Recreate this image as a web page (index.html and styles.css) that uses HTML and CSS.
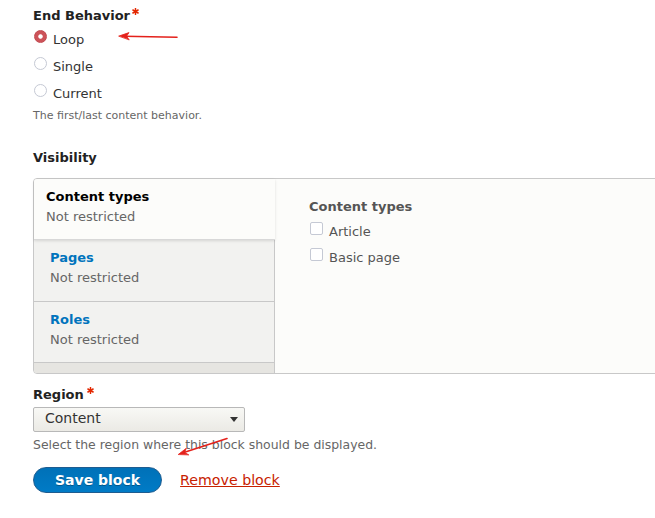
FILE: index.html
```html
<!DOCTYPE html>
<html lang="en">
<head>
<meta charset="utf-8">
<title>Block settings</title>
<link rel="stylesheet" href="styles.css">
</head>
<body>
<div class="page">
  <div class="form-item">
    <div class="label">End Behavior<svg class="req" viewBox="0 0 7 7"><g stroke="#e32700" stroke-width="1.5" stroke-linecap="round"><line x1="3.5" y1="0.6" x2="3.5" y2="6.4"/><line x1="0.9" y1="2" x2="6.1" y2="5"/><line x1="0.9" y1="5" x2="6.1" y2="2"/></g></svg></div>
    <div class="radios">
      <div class="option"><span class="radio checked"></span><span>Loop</span></div>
      <div class="option"><span class="radio"></span><span>Single</span></div>
      <div class="option"><span class="radio"></span><span>Current</span></div>
    </div>
    <div class="desc-small">The first/last content behavior.</div>
  </div>

  <div class="label visibility">Visibility</div>
  <div class="vtabs">
    <ul class="menu">
      <li class="tab active"><div class="tab-title">Content types</div><div class="tab-sum">Not restricted</div></li>
      <li class="tab tab-tall"><div class="tab-title">Pages</div><div class="tab-sum">Not restricted</div></li>
      <li class="tab"><div class="tab-title">Roles</div><div class="tab-sum">Not restricted</div></li>
    </ul>
    <div class="pane">
      <div class="pane-label">Content types</div>
      <div class="checks">
        <div class="check-row"><span class="checkbox"></span><span>Article</span></div>
        <div class="check-row"><span class="checkbox"></span><span>Basic page</span></div>
      </div>
    </div>
  </div>

  <div class="label region-label">Region<svg class="req req-region" viewBox="0 0 7 7"><g stroke="#e32700" stroke-width="1.5" stroke-linecap="round"><line x1="3.5" y1="0.6" x2="3.5" y2="6.4"/><line x1="0.9" y1="2" x2="6.1" y2="5"/><line x1="0.9" y1="5" x2="6.1" y2="2"/></g></svg></div>
  <div class="select"><span class="select-text">Content</span><svg class="caret" viewBox="0 0 8 5"><polygon points="0,0 8,0 4,5" fill="#333"/></svg></div>
  <div class="desc">Select the region where this block should be displayed.</div>

  <div class="actions">
    <button class="button" type="button">Save block</button>
    <a class="link" href="#">Remove block</a>
  </div>
</div>

<svg class="annotations" viewBox="0 0 655 518" width="655" height="518">
  <g stroke="#e4211b" stroke-width="1.6" stroke-linecap="round" fill="#e4211b">
    <line x1="177" y1="37.3" x2="124" y2="36.2"/>
    <polygon points="119,36 129,32.6 126.5,36.2 129,39.6" stroke-width="0.8" stroke-linejoin="round"/>
    <line x1="227" y1="438.5" x2="183" y2="452.8"/>
    <polygon points="178.5,454.3 186.4,448.2 184.5,452.4 188.5,454.7" stroke-width="0.8" stroke-linejoin="round"/>
  </g>
</svg>
</body>
</html>
```

FILE: styles.css
```css
body {
  margin: 0;
  font-family: "DejaVu Sans", "Liberation Sans", sans-serif;
  font-size: 13px;
  color: #333;
  background: #fff;
  overflow: hidden;
}

.page {
  padding: 7px 0 0 33px;
}

.label {
  font-weight: bold;
  line-height: 18px;
  color: #222;
}

.req {
  display: inline-block;
  width: 7px;
  height: 7px;
  vertical-align: top;
  margin: 1px 0 0 2px;
}

.req-region {
  margin-left: 3px;
}

.radios {
  margin-top: 1px;
}

.option {
  display: flex;
  align-items: flex-start;
  height: 27px;
  line-height: 27px;
}

.radio {
  flex: none;
  width: 13px;
  height: 13px;
  box-sizing: border-box;
  border: 1px solid #c5c9d4;
  border-radius: 50%;
  background: #fff;
  margin: 4px 6px 0 1px;
}

.radio.checked {
  border-color: #c24a50;
  background: radial-gradient(circle, #fff 0, #fff 1.8px, #cd5359 2.6px);
}

.desc-small {
  font-size: 11px;
  line-height: 14px;
  color: #666;
  margin-top: 2px;
}

.visibility {
  margin-top: 26px;
}

.vtabs {
  display: flex;
  margin-top: 11px;
  width: 640px;
  height: 196px;
  box-sizing: border-box;
  border: 1px solid #c8c8c8;
  border-radius: 4px;
  background: #fcfcfa;
}

.menu {
  list-style: none;
  margin: 0;
  padding: 0;
  width: 240px;
  flex: none;
  border-right: 1px solid #c8c8c8;
  background: #e6e5e1;
  border-radius: 3px 0 0 3px;
}

.tab {
  height: 61px;
  box-sizing: border-box;
  padding: 8px 12px 0 16px;
  line-height: 20px;
  background: #f2f2f0;
  border-bottom: 1px solid #c8c8c8;
}

.tab-tall {
  height: 62px;
}

.tab.active {
  position: relative;
  z-index: 1;
  margin-right: -1px;
  padding-left: 12px;
  background: #fcfcfa;
  border-bottom-color: #d8d8d8;
  border-top-left-radius: 3px;
  box-shadow: 0 1px 3px rgba(0, 0, 0, 0.12);
}

.tab-title {
  font-weight: bold;
  color: #0074bd;
}

.tab.active .tab-title {
  color: #000;
}

.tab-sum {
  color: #666;
}

.pane {
  flex: 1;
  padding: 19px 35px;
}

.pane-label {
  font-weight: bold;
  line-height: 18px;
  color: #555;
  margin-left: -1px;
}

.checks {
  margin-top: 3px;
}

.check-row {
  display: flex;
  align-items: flex-start;
  height: 26px;
  line-height: 26px;
  color: #555;
}

.checkbox {
  flex: none;
  width: 13px;
  height: 13px;
  box-sizing: border-box;
  border: 1px solid #c5c9d4;
  border-radius: 2px;
  background: #fff;
  margin: 3px 6px 0 0;
}

.region-label {
  margin-top: 12px;
}

.select {
  margin-top: 3px;
  width: 212px;
  height: 25px;
  box-sizing: border-box;
  border: 1px solid #b8b8b8;
  border-radius: 2px;
  background: linear-gradient(#f8f8f5, #ebeae5);
  display: flex;
  align-items: center;
  justify-content: space-between;
  padding: 0 6px 0 11px;
  font-size: 14px;
  color: #333;
}

.select-text {
  line-height: 21px;
  margin-bottom: 2px;
}

.caret {
  width: 8px;
  height: 5px;
  display: block;
}

.desc {
  font-size: 12.45px;
  line-height: 16px;
  color: #666;
  margin-top: 5px;
}

.actions {
  display: flex;
  align-items: center;
  margin-top: 14px;
}

.button {
  height: 26px;
  box-sizing: border-box;
  margin: 0;
  padding: 0 21px;
  border: 1px solid #1e5c90;
  border-radius: 20em;
  background: linear-gradient(to top, #007bc6, #0071b8);
  color: #fff;
  font-family: inherit;
  font-weight: bold;
  font-size: 14px;
  line-height: 24px;
  text-shadow: 0 1px rgba(0, 0, 0, 0.3);
}

.link {
  margin-left: 18px;
  color: #c72100;
  font-size: 14.2px;
  line-height: 26px;
  text-decoration: underline;
}

.annotations {
  position: absolute;
  top: 0;
  left: 0;
  pointer-events: none;
}
```
